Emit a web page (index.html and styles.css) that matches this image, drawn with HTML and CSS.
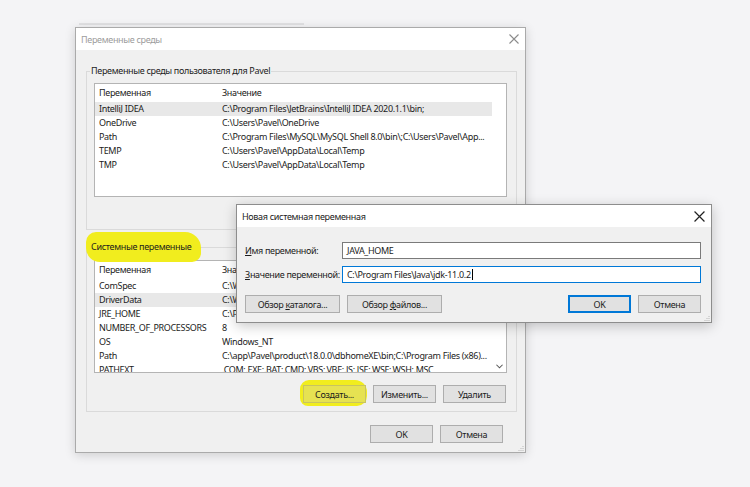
FILE: index.html
```html
<!DOCTYPE html>
<html lang="ru">

<head>
  <meta charset="UTF-8">
  <meta name="viewport" content="width=device-width, initial-scale=1.0">
  <title>Переменные среды</title>
  <link rel="stylesheet" href="styles.css">
</head>

<body>
  <div class="desktop">
    <div class="ghost"></div>

    <!-- main environment variables window (inactive) -->
    <div class="window env-window">
      <div class="titlebar inactive">
        <span class="title">Переменные среды</span>
        <svg class="close" viewBox="0 0 10 10"><path d="M0.5 0.5L9.5 9.5M9.5 0.5L0.5 9.5" /></svg>
      </div>

      <div class="window-body">
        <fieldset class="group user-group">
          <legend>Переменные среды пользователя для Pavel</legend>
          <div class="list user-list">
            <div class="rows">
              <div class="row head"><span>Переменная</span><span>Значение</span></div>
              <div class="row hover"><span>IntelliJ IDEA</span><span>C:\Program Files\JetBrains\IntelliJ IDEA 2020.1.1\bin;</span></div>
              <div class="row"><span>OneDrive</span><span>C:\Users\Pavel\OneDrive</span></div>
              <div class="row"><span>Path</span><span>C:\Program Files\MySQL\MySQL Shell 8.0\bin\;C:\Users\Pavel\App...</span></div>
              <div class="row"><span>TEMP</span><span>C:\Users\Pavel\AppData\Local\Temp</span></div>
              <div class="row"><span>TMP</span><span>C:\Users\Pavel\AppData\Local\Temp</span></div>
            </div>
            <div class="scroll"></div>
          </div>
          <div class="btn-row">
            <button class="btn">Создать...</button>
            <button class="btn">Изменить...</button>
            <button class="btn">Удалить</button>
          </div>
        </fieldset>

        <fieldset class="group system-group">
          <legend><span class="marker">Системные переменные</span></legend>
          <div class="list system-list">
            <div class="rows">
              <div class="row head"><span>Переменная</span><span>Значение</span></div>
              <div class="row"><span>ComSpec</span><span>C:\Windows\system32\cmd.exe</span></div>
              <div class="row hover"><span>DriverData</span><span>C:\Windows\System32\Drivers\DriverData</span></div>
              <div class="row"><span>JRE_HOME</span><span>C:\Program Files\Java\jre1.8.0_251</span></div>
              <div class="row"><span>NUMBER_OF_PROCESSORS</span><span>8</span></div>
              <div class="row"><span>OS</span><span>Windows_NT</span></div>
              <div class="row"><span>Path</span><span>C:\app\Pavel\product\18.0.0\dbhomeXE\bin;C:\Program Files (x86)...</span></div>
              <div class="row"><span>PATHEXT</span><span>.COM;.EXE;.BAT;.CMD;.VBS;.VBE;.JS;.JSE;.WSF;.WSH;.MSC</span></div>
            </div>
            <div class="scroll">
              <svg class="arrow" viewBox="0 0 8 5"><path d="M0.5 0.5L4 4L7.5 0.5" /></svg>
            </div>
          </div>
          <div class="btn-row">
            <span class="marker-btn"><button class="btn btn-marked">Создать...</button></span>
            <button class="btn">Изменить...</button>
            <button class="btn">Удалить</button>
          </div>
        </fieldset>

        <div class="footer">
          <button class="btn">OK</button>
          <button class="btn">Отмена</button>
        </div>
      </div>
      <svg class="grip" viewBox="0 0 6 6"><path d="M5 1v1M3 3v1M5 3v1M1 5v1M3 5v1M5 5v1" /></svg>
    </div>

    <!-- new system variable dialog, floating on top -->
    <div class="window dialog">
      <div class="titlebar">
        <span class="title">Новая системная переменная</span>
        <svg class="close dark" viewBox="0 0 10 10"><path d="M0.5 0.5L9.5 9.5M9.5 0.5L0.5 9.5" /></svg>
      </div>
      <div class="dialog-body">
        <div class="field">
          <label><u>И</u>мя переменной:</label>
          <div class="input">JAVA_HOME</div>
        </div>
        <div class="field">
          <label><u>З</u>начение переменной:</label>
          <div class="input focused">C:\Program Files\Java\jdk-11.0.2<span class="caret"></span></div>
        </div>
        <div class="dialog-buttons">
          <button class="btn btn-browse">Обзор <u>к</u>аталога...</button>
          <button class="btn btn-browse">Обзор <u>ф</u>айлов...</button>
          <span class="spacer"></span>
          <button class="btn btn-default">OK</button>
          <button class="btn">Отмена</button>
        </div>
      </div>
      <svg class="grip" viewBox="0 0 6 6"><path d="M5 1v1M3 3v1M5 3v1M1 5v1M3 5v1M5 5v1" /></svg>
    </div>
  </div>
</body>

</html>
```

FILE: styles.css
```css
body {
  margin: 0;
  width: 750px;
  height: 487px;
  overflow: hidden;
  background: #f4f4f6;
  font-family: 'Noto Sans', 'Open Sans', sans-serif;
  font-size: 9px;
  letter-spacing: -0.33px;
  color: #1c1c1c;
}

.desktop {
  position: relative;
  height: 487px;
  box-sizing: border-box;
  padding: 23px 0 0 75px;
}

.ghost {
  width: 225px;
  height: 2px;
  margin: 0 0 2px 4px;
  background: rgba(0, 0, 0, 0.07);
}

.window {
  position: relative;
  box-sizing: border-box;
  display: flex;
  flex-direction: column;
  background: #f0f0f0;
  border: 1px solid #aaaaaa;
  box-shadow: 0 2px 10px rgba(0, 0, 0, 0.16);
}

.env-window {
  width: 451px;
  height: 426px;
}

.titlebar {
  flex: none;
  height: 22px;
  display: flex;
  align-items: center;
  justify-content: space-between;
  padding: 0 6px 0 5px;
  background: #fff;
}

.titlebar.inactive .title {
  color: #9c9c9c;
}

.close {
  width: 10px;
  height: 10px;
  fill: none;
  stroke: #8c8c8c;
  stroke-width: 1.1;
}

.close.dark {
  width: 11px;
  height: 11px;
  stroke: #222;
}

.window-body {
  display: flex;
  flex-direction: column;
  padding: 14px 8px 9px 10px;
}

.group {
  margin: 0;
  min-width: 0;
  border: 1px solid #dadada;
  padding: 5px 9px 6px 7px;
}

.group legend {
  height: 14px;
  line-height: 14px;
  padding: 0 1px;
  margin-left: -4px;
}

.system-group {
  margin-top: 10px;
  padding-top: 6px;
  padding-bottom: 8px;
}

.marker {
  background: #f1ed1e;
  padding: 8px 10px 9px 5px;
  margin: 0 -10px 0 -5px;
  border-radius: 10px 16px 9px 14px;
}

.list {
  display: flex;
  background: #fff;
  border: 1px solid #b4b4b4;
  overflow: hidden;
}

.user-list {
  height: 114px;
  box-sizing: border-box;
}

.system-list {
  height: 113px;
  box-sizing: border-box;
}

.rows {
  flex: 1;
  min-width: 0;
}

.row {
  display: grid;
  grid-template-columns: 123px 1fr;
  height: 14px;
  line-height: 14px;
  padding-left: 4px;
  white-space: nowrap;
  overflow: hidden;
}

.row.head {
  height: 18px;
  line-height: 18px;
}

.row.hover {
  background: #e8e8e8;
}

.scroll {
  width: 14px;
  flex: none;
  display: flex;
  flex-direction: column;
  justify-content: flex-end;
  align-items: center;
}

.arrow {
  width: 7px;
  height: 5px;
  margin-bottom: 3px;
  fill: none;
  stroke: #555;
  stroke-width: 1.2;
}

.btn-row {
  display: flex;
  justify-content: flex-end;
  align-items: flex-start;
  gap: 7px;
  margin-top: 8px;
  padding-right: 1px;
}

.system-group .btn-row {
  margin-top: 12px;
}

.btn {
  box-sizing: border-box;
  width: 63px;
  height: 18px;
  padding: 0;
  font: inherit;
  letter-spacing: inherit;
  color: #1c1c1c;
  background: #e1e1e1;
  border: 1px solid #adadad;
}

.marker-btn {
  display: flex;
  padding: 5px 1px 3px 3px;
  margin: -5px -1px -3px -3px;
  background: #f1ed1e;
  border-radius: 9px 12px 10px 8px;
}

.btn-marked {
  background: #e6e252;
  border-color: #c8c460;
}

.footer {
  display: flex;
  justify-content: flex-end;
  gap: 7px;
  margin-top: 13px;
  padding-right: 14px;
}

.grip {
  position: absolute;
  right: 1px;
  bottom: 1px;
  width: 6px;
  height: 6px;
  stroke: #b8b8b8;
  stroke-width: 1;
}

.dialog {
  position: absolute;
  left: 236px;
  top: 204px;
  width: 476px;
  height: 119px;
  border-color: #8d8d8d;
  box-shadow: 0 3px 12px rgba(0, 0, 0, 0.22);
}

.dialog .titlebar {
  height: 22px;
}

.dialog-body {
  display: flex;
  flex-direction: column;
  gap: 7px;
  padding: 15px 10px 9px 8px;
}

.field {
  display: grid;
  grid-template-columns: 97px 1fr;
  align-items: center;
}

.field label {
  white-space: nowrap;
}

.input {
  box-sizing: border-box;
  height: 17px;
  line-height: 15px;
  padding-left: 4px;
  background: #fff;
  border: 1px solid #7a7a7a;
}

.input.focused {
  border-color: #0078d7;
}

.caret {
  display: inline-block;
  width: 1px;
  height: 11px;
  margin-left: 1px;
  vertical-align: -2px;
  background: #000;
}

.dialog-buttons {
  display: flex;
  gap: 7px;
  margin-top: 5px;
}

.btn-browse {
  width: 95px;
}

.spacer {
  flex: 1;
}

.btn-default {
  border: 2px solid #0078d7;
}
```
